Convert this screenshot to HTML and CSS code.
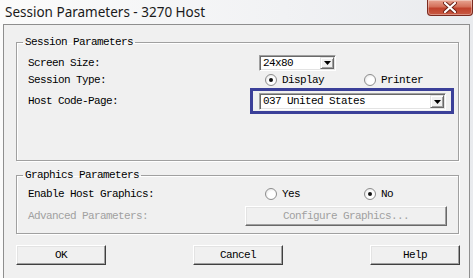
FILE: index.html
```html
<!DOCTYPE html>
<html lang="en">
<head>
    <meta charset="UTF-8">
    <title>Session Parameters - 3270 Host</title>
    <link rel="stylesheet" href="styles.css">
</head>
<body>
    <div class="window">
        <div class="titlebar">
            <span class="title">Session Parameters - 3270 Host</span>
            <div class="close">
                <svg width="14" height="11" viewBox="0 0 14 11">
                    <path d="M2 1 L12 10 M12 1 L2 10" stroke="#6b2016" stroke-width="4" stroke-linecap="round"/>
                    <path d="M2 1 L12 10 M12 1 L2 10" stroke="#ffffff" stroke-width="2.2" stroke-linecap="round"/>
                </svg>
            </div>
        </div>
        <div class="client">
            <fieldset class="group group-session">
                <legend>Session Parameters</legend>
                <div class="row row-size">
                    <span class="label">Screen Size:</span>
                    <div class="combo combo-size">
                        <span class="combo-text">24x80</span>
                        <span class="combo-btn"><svg width="7" height="4" viewBox="0 0 7 4"><path d="M0 0 H7 L3.5 4 Z" fill="#000"/></svg></span>
                    </div>
                </div>
                <div class="row row-type">
                    <span class="label">Session Type:</span>
                    <div class="radios">
                        <span class="option"><span class="radio checked"></span>Display</span>
                        <span class="option"><span class="radio"></span>Printer</span>
                    </div>
                </div>
                <div class="row row-codepage">
                    <span class="label">Host Code-Page:</span>
                    <div class="highlight">
                        <div class="combo combo-codepage">
                            <span class="combo-text">037 United States</span>
                            <span class="combo-btn"><svg width="7" height="4" viewBox="0 0 7 4"><path d="M0 0 H7 L3.5 4 Z" fill="#000"/></svg></span>
                        </div>
                    </div>
                </div>
            </fieldset>

            <fieldset class="group group-graphics">
                <legend>Graphics Parameters</legend>
                <div class="row row-enable">
                    <span class="label">Enable Host Graphics:</span>
                    <div class="radios">
                        <span class="option"><span class="radio"></span>Yes</span>
                        <span class="option"><span class="radio checked"></span>No</span>
                    </div>
                </div>
                <div class="row row-advanced">
                    <span class="label disabled">Advanced Parameters:</span>
                    <button class="btn btn-configure" disabled>Configure Graphics...</button>
                </div>
            </fieldset>

            <div class="actions">
                <button class="btn">OK</button>
                <button class="btn">Cancel</button>
                <button class="btn">Help</button>
            </div>
        </div>
    </div>
</body>
</html>
```

FILE: styles.css
```css
html, body {
    margin: 0;
    padding: 0;
}
body {
    width: 473px;
    height: 278px;
    overflow: hidden;
    background: #eef1f4;
}
.window {
    height: 278px;
    display: flex;
    flex-direction: column;
    background: linear-gradient(to right, #fbfbfb, #f1f2f4 60%, #e9ebee);
}
.titlebar {
    height: 24px;
    display: flex;
    align-items: flex-start;
    padding-left: 5px;
}
.title {
    font-family: "Noto Sans", "Open Sans", sans-serif;
    font-size: 13.5px;
    line-height: 24px;
    color: #1a1a1a;
}
.close {
    margin-left: auto;
    width: 44px;
    height: 15px;
    border: 1px solid #7a2a1f;
    border-top: none;
    border-radius: 0 0 4px 4px;
    background: linear-gradient(#e8a592 0%, #d4705a 45%, #c0422c 55%, #c85a44 100%);
    display: flex;
    align-items: center;
    justify-content: center;
    box-shadow: inset 0 0 0 1px rgba(255, 255, 255, 0.35);
}
.client {
    flex: 1;
    margin: 0 3px;
    border: 1px solid #8e8e8e;
    border-bottom: none;
    background: #f0f0f0;
    padding: 11px 10px 0 12px;
    font-family: "Liberation Mono", monospace;
    font-size: 11px;
    letter-spacing: -0.6px;
    color: #000;
}
.group {
    margin: 0;
    border: 1px solid #a0a0a0;
    box-shadow: inset 1px 1px 0 #fff, 1px 1px 0 #fff;
    padding: 6px 10px 46px 11px;
    min-width: 0;
}
.group legend {
    line-height: 12px;
    padding: 0 2px;
    margin-left: -5px;
}
.group-graphics {
    margin-top: 8px;
    padding-top: 4px;
    padding-bottom: 7px;
}
.row {
    display: flex;
    align-items: center;
}
.row-size { height: 17px; }
.row-type { height: 16px; margin-top: 1px; }
.row-codepage { height: 26px; }
.row-enable { height: 18px; }
.row-advanced { height: 20px; margin-top: 3px; }
.label {
    width: 231px;
    flex: none;
}
.disabled {
    color: #a0a0a0;
}
.combo {
    box-sizing: border-box;
    height: 16px;
    display: flex;
    align-items: stretch;
    background: #fff;
    border: 1px solid;
    border-color: #a0a0a0 #fff #fff #a0a0a0;
    box-shadow: inset 1px 1px 0 #696969, inset -1px -1px 0 #e3e3e3;
    padding: 1px;
}
.combo-size { width: 77px; }
.combo-codepage { width: 187px; height: 17px; }
.combo-text {
    flex: 1;
    padding-left: 2px;
    line-height: 12px;
}
.combo-codepage .combo-text { line-height: 13px; }
.combo-btn {
    box-sizing: border-box;
    width: 14px;
    background: #f0f0f0;
    border: 1px solid;
    border-color: #e3e3e3 #696969 #696969 #e3e3e3;
    box-shadow: inset 1px 1px 0 #fff, inset -1px -1px 0 #a0a0a0;
    display: flex;
    align-items: center;
    justify-content: center;
}
.highlight {
    margin-left: -9px;
    border: 3px solid #3b4099;
    padding: 2px 5px 1px 6px;
}
.radios {
    display: flex;
    padding-left: 6px;
}
.option {
    width: 99px;
    display: flex;
    align-items: center;
}
.radio {
    position: relative;
    box-sizing: border-box;
    width: 12px;
    height: 12px;
    margin-right: 5px;
    border-radius: 50%;
    border: 1px solid #8d8d8d;
    background: radial-gradient(circle at 60% 60%, #ffffff 40%, #dcdcdc 100%);
}
.radio.checked::after {
    content: "";
    position: absolute;
    left: 3px;
    top: 3px;
    width: 4px;
    height: 4px;
    border-radius: 50%;
    background: #111;
}
.btn {
    box-sizing: border-box;
    width: 90px;
    height: 20px;
    padding: 0;
    font-family: "Liberation Mono", monospace;
    font-size: 11px;
    letter-spacing: -0.6px;
    color: #000;
    background: #f0f0f0;
    border: 1px solid;
    border-color: #fff #404040 #404040 #fff;
    box-shadow: inset -1px -1px 0 #a0a0a0, inset 1px 1px 0 #e3e3e3;
}
.btn-configure {
    width: 202px;
    margin-left: -14px;
    color: #a0a0a0;
    border-color: #fff #696969 #696969 #fff;
}
.actions {
    display: flex;
    justify-content: space-between;
    margin: 11px -1px 0 0;
}
```
